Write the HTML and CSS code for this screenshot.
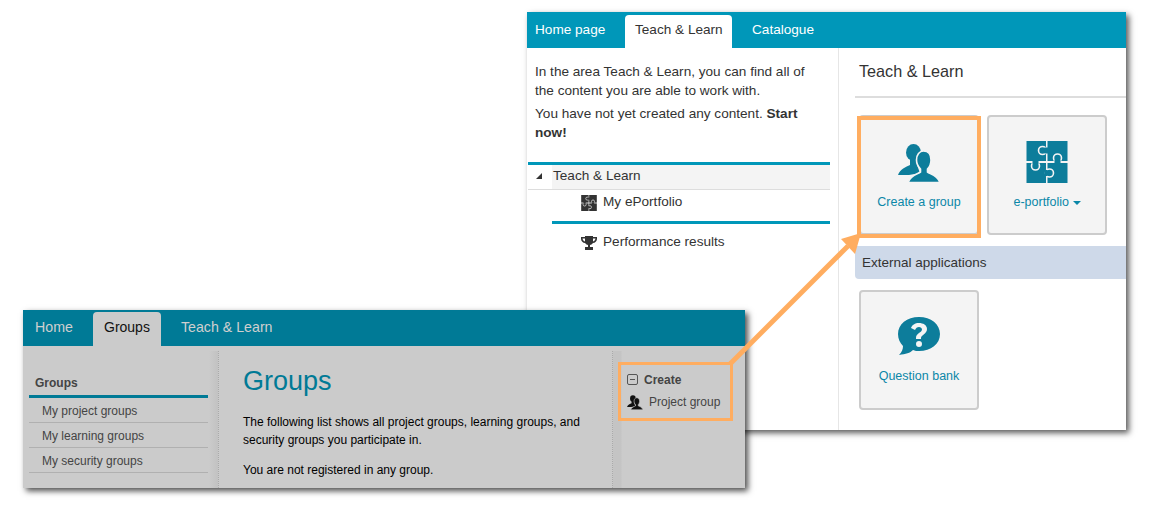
FILE: index.html

```html
<!DOCTYPE html>
<html lang="en">
<head>
    <meta charset="UTF-8">
    <title>Teach &amp; Learn and Groups</title>
    <link rel="stylesheet" href="styles.css">
</head>
<body>
<svg class="defs" width="0" height="0">
    <symbol id="users" viewBox="0 -3 42 42">
        <ellipse cx="15.500" cy="8.500" rx="7.500" ry="8.500"/>
        <path d="M12 15h7v6l3 8-11 2H0c2-6 8-8 12-10z"/>
        <path class="gap" d="M25.500 7c4.500 0 7.500 3.500 7.500 9 0 4-1.500 7-3.500 9v3c3 2 10 3 12.500 10.500H10c2.500-7.500 9.500-8.500 12.500-10.500v-3c-2-2-4-5-4-9 0-5.500 3-9 7-9z"/>
    </symbol>
    <symbol id="puzzle" viewBox="0 0 41 42">
        <rect x="0" y="0" width="19.500" height="20"/>
        <rect x="21" y="0" width="20" height="20"/>
        <rect x="0" y="22" width="19.500" height="20"/>
        <rect x="21" y="22" width="20" height="20"/>
        <circle class="gap" cx="16" cy="9.500" r="4"/>
        <rect x="18" y="6.500" width="5" height="6"/>
        <circle class="gap" cx="31" cy="17" r="4"/>
        <rect x="28" y="19" width="6" height="5"/>
        <circle class="gap" cx="9" cy="25" r="4"/>
        <rect x="6" y="18" width="6" height="5"/>
        <circle class="gap" cx="23" cy="32" r="4"/>
        <rect x="18" y="29" width="3" height="6"/>
    </symbol>
</svg>

<div class="window learn-window">
    <div class="tabs">
        <span class="tab">Home page</span>
        <span class="tab active">Teach &amp; Learn</span>
        <span class="tab">Catalogue</span>
    </div>
    <div class="learn-body">
        <div class="learn-left">
            <div class="intro">
                <p>In the area Teach &amp; Learn, you can find all of the content you are able to work with.</p>
                <p>You have not yet created any content. <strong>Start now!</strong></p>
            </div>
            <div class="tree">
                <div class="tree-root"><span class="tree-arrow"></span><span class="tree-label">Teach &amp; Learn</span></div>
                <div class="tree-item">
                    <svg class="tree-icon"><use href="#puzzle"/></svg>
                    <span>My ePortfolio</span>
                </div>
                <div class="tree-item second">
                    <svg class="tree-icon" viewBox="0 0 16 14">
                        <path d="M4 0h8v1h4v2c0 2-2 4-4 4-1 1-2 2-3 2v2h3v3H4v-3h3V9C6 9 5 8 4 7 2 7 0 5 0 3V1h4zM1.500 2.500c0 1 1 2.500 2.500 3V2.500zM14.500 2.500H12v3c1.500-.5 2.500-2 2.500-3z"/>
                    </svg>
                    <span>Performance results</span>
                </div>
            </div>
        </div>
        <div class="learn-right">
            <h2>Teach &amp; Learn</h2>
            <div class="cards">
                <div class="card marked">
                    <svg class="card-icon"><use href="#users"/></svg>
                    Create a group
                </div>
                <div class="card">
                    <svg class="card-icon"><use href="#puzzle"/></svg>
                    <span>e-portfolio <i class="caret"></i></span>
                </div>
            </div>
            <div class="section-bar">External applications</div>
            <div class="cards">
                <div class="card low">
                    <svg class="card-icon" viewBox="0 -1 42 42">
                        <path fill-rule="evenodd" d="M21 0c12 0 21 7 21 17s-9 17-21 17c-2 0-4 0-6-1-3 3-7 4-14 5 3-3 4-6 4-9C2 26 0 22 0 17 0 7 9 0 21 0zM21 6c-4 0-7 2-8 5l4 2c1-2 2-3 4-3 1.500 0 3 1 3 2.500 0 3-6 3.500-6 8.500v1h5v-1c0-3 6-4 6-9 0-4-4-6-8-6zM21 24c-2 0-3 1-3 3s1 3 3 3 3-1 3-3-1-3-3-3z"/>
                    </svg>
                    Question bank
                </div>
            </div>
        </div>
    </div>
</div>

<div class="window groups-window">
    <div class="tabs">
        <span class="tab">Home</span>
        <span class="tab active">Groups</span>
        <span class="tab">Teach &amp; Learn</span>
    </div>
    <div class="groups-body">
        <div class="groups-side">
            <div class="side-title">Groups</div>
            <div class="side-item">My project groups</div>
            <div class="side-item">My learning groups</div>
            <div class="side-item">My security groups</div>
        </div>
        <div class="groups-main">
            <h1>Groups</h1>
            <p>The following list shows all project groups, learning groups, and security groups you participate in.</p>
            <p>You are not registered in any group.</p>
        </div>
        <div class="groups-tools">
            <div class="create-box">
                <div class="create-title"><span class="minus"></span>Create</div>
                <div class="create-item">
                    <svg class="create-icon"><use href="#users"/></svg>
                    Project group
                </div>
            </div>
        </div>
    </div>
</div>

<svg class="arrow" width="1160" height="514">
    <path d="M730 364L848 246" fill="none" stroke="#ffad60" stroke-width="5"/>
    <path d="M861 233L855 254 841 239z" fill="#ffad60"/>
</svg>
</body>
</html>
```

FILE: styles.css

```css
html, body {
    height: 100%;
    margin: 0;
    background: #fff;
    font-family: "Liberation Sans", Arial, sans-serif;
    overflow: hidden;
}
.defs {
    position: absolute;
}
.gap {
    stroke: var(--gap, #f4f4f4);
    stroke-width: 1.6;
}
.window {
    position: absolute;
    box-sizing: border-box;
    display: flex;
    flex-direction: column;
}
.arrow {
    position: absolute;
    left: 0;
    top: 0;
}
.tabs {
    display: flex;
    height: 36px;
    flex: none;
    align-items: flex-end;
}
.tab {
    box-sizing: border-box;
}
.tab.active {
    border-radius: 4px 4px 0 0;
}

/* top window */
.learn-window {
    left: 527px;
    top: 12px;
    width: 599px;
    height: 418px;
    background: #fff;
    box-shadow: 3px 3px 6px rgba(0, 0, 0, 0.65);
    color: #333;
}
.learn-window .tabs {
    background: #0097b9;
    padding-left: 8px;
}
.learn-window .tab {
    height: 33px;
    line-height: 29px;
    font-size: 13.6px;
    color: #fff;
}
.learn-window .tab:first-child {
    width: 90px;
}
.learn-window .tab.active {
    width: 107px;
    padding-left: 10px;
    background: #fff;
    color: #333;
}
.learn-window .tab:last-child {
    padding-left: 20px;
}
.learn-body {
    flex: 1;
    display: flex;
}
.learn-left {
    width: 312px;
    box-sizing: border-box;
    border-right: 1px solid #e6e6e6;
    padding-right: 8px;
}
.intro {
    padding: 14px 15px 0 8px;
    height: 100px;
    font-size: 13.6px;
    line-height: 19px;
}
.intro p {
    margin: 0 0 4px;
}
.tree {
    margin-left: 1px;
    border-top: 3px solid #0097b9;
    font-size: 13.6px;
}
.tree-root {
    display: flex;
    height: 24px;
    border-bottom: 1px solid #ddd;
}
.tree-arrow {
    width: 24px;
    position: relative;
}
.tree-arrow::after {
    content: "";
    position: absolute;
    left: 8px;
    top: 8px;
    border-style: solid;
    border-width: 0 0 6px 6px;
    border-color: transparent transparent #333 transparent;
}
.tree-label {
    flex: 1;
    background: #f4f4f4;
    padding-left: 1px;
    line-height: 22px;
}
.tree-item {
    margin-left: 24px;
    padding: 0 0 5px 29px;
    box-sizing: border-box;
    display: flex;
    align-items: center;
    gap: 6px;
    height: 31px;
    color: #333;
}
.tree-item span {
    margin-bottom: 4px;
}
.tree-item.second {
    border-top: 3px solid #0097b9;
    padding: 4px 0 0 29px;
    height: 37px;
}
.tree-icon {
    width: 16px;
    height: 16px;
    fill: #333;
    --gap: #fff;
}
.learn-right {
    flex: 1;
    padding-left: 16px;
}
.learn-right h2 {
    margin: 0 0 17px;
    padding: 14px 0 13px 4px;
    height: 21px;
    line-height: 19px;
    font-size: 16.2px;
    font-weight: normal;
    border-bottom: 2px solid #ddd;
}
.cards {
    display: flex;
    gap: 8px;
    padding-left: 4px;
}
.card {
    width: 120px;
    height: 120px;
    box-sizing: border-box;
    border: 2px solid #ccc;
    border-radius: 4px;
    background: #f4f4f4;
    display: flex;
    flex-direction: column;
    align-items: center;
    padding-top: 24px;
    font-size: 12.5px;
    color: #0b87a8;
    position: relative;
}
.card.marked::after {
    content: "";
    position: absolute;
    left: -4px;
    top: -1px;
    width: 116px;
    height: 114px;
    border: 4px solid #ffad60;
}
.card-icon {
    width: 42px;
    height: 42px;
    fill: #0d7d9b;
    margin-bottom: 12px;
}
.card.low .card-icon {
    margin-bottom: 11px;
}
.caret {
    display: inline-block;
    vertical-align: middle;
    border-style: solid;
    border-width: 4px 4px 0;
    border-color: #0b87a8 transparent transparent;
}
.section-bar {
    margin: 11px 0;
    height: 33px;
    line-height: 33px;
    padding-left: 7px;
    background: #ced9e9;
    border-radius: 0 0 0 4px;
    font-size: 13.5px;
}

/* bottom window */
.groups-window {
    left: 23px;
    top: 310px;
    width: 722px;
    height: 178px;
    background: #cbcbcb;
    box-shadow: 3px 3px 6px rgba(0, 0, 0, 0.7);
    color: #000;
}
.groups-window .tabs {
    background: #007a96;
    padding-left: 12px;
}
.groups-window .tab {
    height: 34px;
    line-height: 31px;
    font-size: 14.2px;
    color: #cfcfcf;
}
.groups-window .tab:first-child {
    width: 58px;
}
.groups-window .tab.active {
    width: 68px;
    padding-left: 11px;
    font-size: 14px;
    background: #cbcbcb;
    color: #111;
}
.groups-window .tab:last-child {
    padding-left: 20px;
}
.groups-body {
    flex: 1;
    display: flex;
    min-height: 0;
    overflow: hidden;
}
.groups-side {
    width: 195px;
    box-sizing: border-box;
    margin-top: 5px;
    padding: 25px 10px 0 6px;
    font-size: 12px;
    color: #444;
    background: linear-gradient(to right, #cbcbcb 186px, #c2c2c2 195px);
}
.side-title {
    padding-left: 6px;
    height: 19px;
    font-weight: bold;
    border-bottom: 3px solid #007a96;
}
.side-item {
    height: 24px;
    line-height: 26px;
    padding-left: 13px;
    border-bottom: 1px solid #b0b0b0;
}
.groups-main {
    flex: 1;
    margin-top: 5px;
    border-left: 1px dotted #aaa;
    padding: 15px 26px 0 24px;
    font-size: 12px;
    line-height: 18px;
}
.groups-main h1 {
    margin: 0 0 17px;
    font-size: 27px;
    line-height: 30px;
    font-weight: normal;
    color: #007a96;
}
.groups-main p {
    margin: 0 0 12px;
}
.groups-tools {
    width: 133px;
    box-sizing: border-box;
    margin-top: 5px;
    border-left: 1px dotted #aaa;
    padding: 11px 0 0 5px;
    background: linear-gradient(to right, #c4c4c4 8px, #cbcbcb 9px);
}
.create-box {
    width: 115px;
    height: 59px;
    box-sizing: border-box;
    border: 3px solid #ffad60;
    font-size: 12px;
    color: #444;
    padding: 6px 0 0 6px;
}
.create-title {
    display: flex;
    align-items: center;
    gap: 6px;
    height: 17px;
    font-weight: bold;
}
.minus {
    width: 9px;
    height: 9px;
    border: 1px solid #555;
    border-radius: 2px;
    position: relative;
}
.minus::after {
    content: "";
    position: absolute;
    left: 2px;
    top: 4px;
    width: 5px;
    height: 1px;
    background: #555;
}
.create-item {
    display: flex;
    gap: 6px;
    height: 22px;
    line-height: 22px;
    margin-top: 3px;
}
.create-icon {
    width: 16px;
    height: 16px;
    margin-top: 3px;
    fill: #111;
    --gap: #cbcbcb;
}
```
